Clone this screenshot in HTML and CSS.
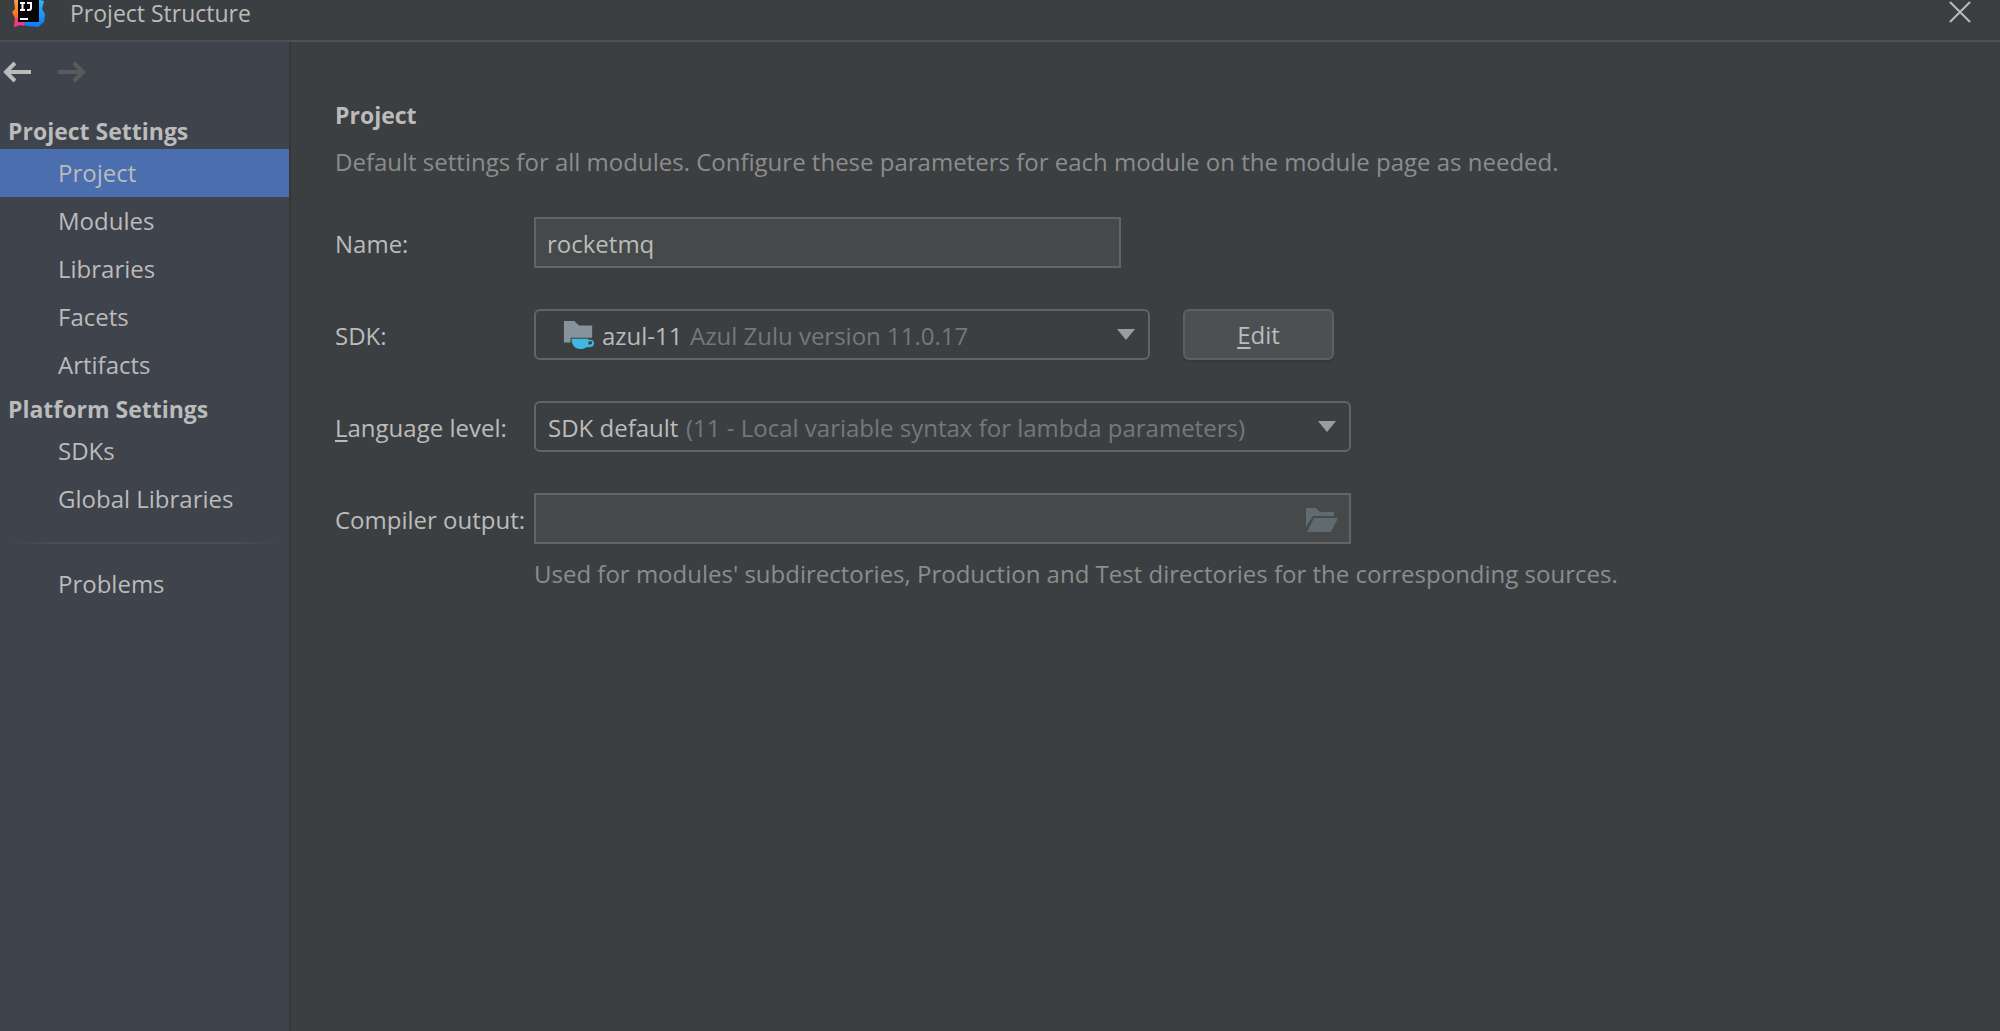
FILE: index.html
```html
<!DOCTYPE html>
<html lang="en">
<head>
    <meta charset="UTF-8">
    <title>Project Structure</title>
    <link rel="stylesheet" href="styles.css">
</head>
<body>
    <header class="titlebar">
        <svg class="logo" viewBox="0 0 34 34" aria-hidden="true">
            <defs>
                <linearGradient id="warm" x1="0" y1="0" x2="0" y2="1">
                    <stop offset="0" stop-color="#f9a66c"/>
                    <stop offset="0.5" stop-color="#fc801d"/>
                    <stop offset="1" stop-color="#fe2857"/>
                </linearGradient>
                <linearGradient id="cool" x1="0" y1="0" x2="0" y2="1">
                    <stop offset="0" stop-color="#3bb8f5"/>
                    <stop offset="1" stop-color="#087cfa"/>
                </linearGradient>
            </defs>
            <path fill="url(#warm)" d="M2 6 12 2l8 4v23l-11 1-7 3 1-9-3-6 3-3z"/>
            <path fill="#ee3a8c" d="m2 33 2-9 13 4-5 4-3-1z"/>
            <path fill="url(#cool)" d="m20 4 12 3-2 8 3 5-1 8-6 5-11-1-4-3 10-3z"/>
            <path fill="#070707" d="M6 6h21v22H6z"/>
            <path fill="none" stroke="#fff" stroke-width="2" d="M8 9h5M10.500 9v8M8 16h5M15 9h4v5q0 2-2 2h-2"/>
            <path fill="#fff" d="M8 24h8v2H8z"/>
        </svg>
        <h1>Project Structure</h1>
        <button class="icon-button close" aria-label="Close">
            <svg width="24" height="24" viewBox="0 0 24 24"><path d="m2 2 20 20M22 2 2 22" fill="none" stroke="#bbb" stroke-width="2"/></svg>
        </button>
    </header>

    <div class="window">
        <aside class="sidebar">
            <div class="history">
                <button class="icon-button" aria-label="Back">
                    <svg width="28" height="22" viewBox="0 0 28 22"><path d="M28 11H3M12 2l-9 9 9 9" fill="none" stroke="#bbb" stroke-width="4"/></svg>
                </button>
                <button class="icon-button" aria-label="Forward" disabled>
                    <svg width="28" height="22" viewBox="0 0 28 22"><path d="M0 11h25M16 2l9 9-9 9" fill="none" stroke="#5a5b5b" stroke-width="4"/></svg>
                </button>
            </div>
            <nav>
                <h2>Project Settings</h2>
                <a class="active" href="#project">Project</a>
                <a href="#modules">Modules</a>
                <a href="#libraries">Libraries</a>
                <a href="#facets">Facets</a>
                <a href="#artifacts">Artifacts</a>
                <h2>Platform Settings</h2>
                <a href="#sdks">SDKs</a>
                <a href="#global-libraries">Global Libraries</a>
                <hr>
                <a href="#problems">Problems</a>
            </nav>
        </aside>

        <main class="content" id="project">
            <h2>Project</h2>
            <p class="description">Default settings for all modules. Configure these parameters for each module on the module page as needed.</p>

            <form class="form">
                <label for="name">Name:</label>
                <div class="row">
                    <input class="field name" type="text" id="name" value="rocketmq">
                </div>

                <label for="sdk">SDK:</label>
                <div class="row">
                    <div class="combo sdk">
                        <svg class="sdk-icon" width="32" height="32" viewBox="0 0 34 32" aria-hidden="true">
                            <path fill="#87939a" d="M1 1h11l5 5h14v13H8v5H1z"/>
                            <path fill="#40b6e0" d="M9 20h18v1h2q4 0 4 4t-6 4h-2q-3 2-6 2-7 0-9-6-1-2-1-5zm18 3v3h2q2 0 2-2t-2-1z"/>
                        </svg>
                        <select id="sdk">
                            <option>azul-11</option>
                        </select>
                        <span class="hint">Azul Zulu version 11.0.17</span>
                        <svg class="arrow" width="18" height="11" viewBox="0 0 18 11" aria-hidden="true"><path fill="#9a9da0" d="M0 0h18l-9 11z"/></svg>
                    </div>
                    <button class="edit" type="button"><u>E</u>dit</button>
                </div>

                <label for="level"><u>L</u>anguage level:</label>
                <div class="row">
                    <div class="combo level">
                        <select id="level">
                            <option>SDK default</option>
                        </select>
                        <span class="hint">(11 - Local variable syntax for lambda parameters)</span>
                        <svg class="arrow" width="18" height="11" viewBox="0 0 18 11" aria-hidden="true"><path fill="#9a9da0" d="M0 0h18l-9 11z"/></svg>
                    </div>
                </div>

                <label for="output">Compiler output:</label>
                <div class="row">
                    <div class="field output">
                        <input type="text" id="output">
                        <button class="icon-button" type="button" aria-label="Browse">
                            <svg width="32" height="24" viewBox="0 0 32 24"><path fill="#616a6e" d="M0 0h10l4 4h14v4H7L0 19zM8 10h24l-7 14H1z"/></svg>
                        </button>
                    </div>
                </div>
                <p class="note">Used for modules' subdirectories, Production and Test directories for the corresponding sources.</p>
            </form>
        </main>
    </div>
</body>
</html>
```
FILE: styles.css
```css
* {
    box-sizing: border-box;
}
body {
    margin: 0;
    min-height: 100vh;
    display: flex;
    flex-direction: column;
    background-color: #3c3f41;
    color: #bbbbbb;
    font-family: "Open Sans", "Noto Sans", sans-serif;
    font-size: 24px;
    line-height: 32px;
}
h1, h2, p {
    margin: 0;
}
h1, h2 {
    font-size: 23px;
}
h1 {
    font-weight: normal;
}
input, select, button {
    font: inherit;
    color: inherit;
}
u {
    text-decoration-thickness: 2px;
    text-underline-offset: 3px;
}
.icon-button {
    display: flex;
    padding: 0;
    border: none;
    background: none;
}
.titlebar {
    display: flex;
    align-items: flex-start;
    height: 42px;
    padding-right: 28px;
    border-bottom: 2px solid #4f504f;
}
.logo {
    width: 34px;
    height: 34px;
    margin: -6px 24px 0 12px;
}
.titlebar h1 {
    line-height: 26px;
}
.close {
    margin-left: auto;
}
.window {
    flex: 1;
    display: flex;
}
.sidebar {
    width: 291px;
    flex-shrink: 0;
    background-color: #3e434c;
    border-right: 2px solid #373536;
}
.history {
    display: flex;
    gap: 27px;
    padding: 19px 3px 28px;
}
.sidebar h2 {
    padding: 4px 8px 2px;
}
.sidebar a {
    display: block;
    padding: 8px 58px;
    color: inherit;
    text-decoration: none;
    white-space: nowrap;
}
.sidebar a.active {
    background-color: #4b6eaf;
}
.sidebar hr {
    height: 2px;
    margin: 19px 8px 16px;
    border: none;
    background: linear-gradient(to right, transparent, #4f5051 20%, #4f5051 80%, transparent);
}
.content {
    flex: 1;
    padding: 57px 44px;
}
.description {
    margin-top: 15px;
    color: #8c8c8c;
}
.form {
    display: grid;
    grid-template-columns: 187px 1fr;
    column-gap: 12px;
    row-gap: 41px;
    align-items: center;
    margin-top: 39px;
}
.form label {
    padding-top: 2px;
    white-space: nowrap;
}
.row {
    display: flex;
    gap: 33px;
}
.field, .combo {
    display: flex;
    align-items: center;
    height: 51px;
    border: 2px solid #646464;
}
.field {
    padding: 2px 11px 0;
    background-color: #45494a;
}
.combo {
    padding: 0 13px 0 12px;
    gap: 7px;
    border-radius: 6px;
}
.combo select {
    padding: 2px 0 0;
    border: none;
    background: none;
    appearance: none;
}
.hint {
    padding-top: 2px;
    color: #777777;
    white-space: nowrap;
}
.arrow {
    margin-left: auto;
}
.name {
    width: 587px;
}
.sdk {
    width: 616px;
}
.level, .output {
    width: 817px;
}
.sdk-icon {
    margin-left: 15px;
}
.output input {
    flex: 1;
    border: none;
    background: none;
}
.edit {
    width: 151px;
    padding-top: 2px;
    border: 2px solid #5e6060;
    border-radius: 6px;
    background-color: #4c5052;
    box-shadow: 0 2px 1px #36393b;
}
.note {
    grid-column: 2;
    margin-top: -27px;
    color: #8c8c8c;
}
```
